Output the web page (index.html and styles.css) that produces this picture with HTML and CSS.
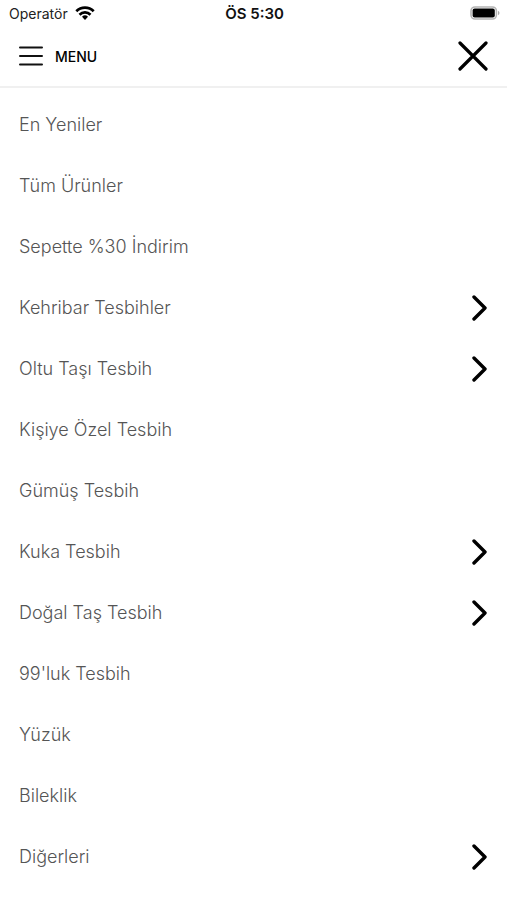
FILE: index.html
```html
<!DOCTYPE html>
<html lang="tr">
<head>
<meta charset="utf-8">
<meta name="viewport" content="width=device-width, initial-scale=1">
<title>Menu</title>
<link rel="stylesheet" href="styles.css">
</head>
<body>
<div class="status">
  <div class="carrier"><span>Operatör</span>
    <svg width="20" height="14" viewBox="0 0 20 14" aria-hidden="true"><g fill="none" stroke="#000" stroke-width="2.7"><path d="M1.3 5.2a12.4 12.4 0 0 1 17.4 0"/><path d="M4.5 8.7a7.8 7.8 0 0 1 11 0"/></g><path d="M10 13.9l-3-3.1a4.3 4.3 0 0 1 6 0z"/></svg>
  </div>
  <time class="clock">ÖS 5:30</time>
  <svg class="battery" width="30" height="14" viewBox="0 0 30 14" aria-hidden="true"><rect x="1" y="1" width="25.4" height="12" rx="4" fill="#fff" stroke="#b4b4b4" stroke-width="1.6"/><rect x="2.6" y="2.6" width="22.2" height="8.8" rx="2"/><path d="M28 4.8v4.4c2-.8 2-3.6 0-4.4z" fill="#aaa"/></svg>
</div>
<header class="bar">
  <button class="toggle" type="button">
    <svg width="24" height="20" viewBox="0 0 24 20" aria-hidden="true"><path d="M1 1.5h22M1 10h22M1 18.5h22" stroke="#111" stroke-width="2" stroke-linecap="round"/></svg>
    <span>MENU</span>
  </button>
  <button class="close" type="button" aria-label="Kapat">
    <svg width="30" height="30" viewBox="0 0 30 30" aria-hidden="true"><path d="M2 2l26 26M28 2L2 28" stroke="#000" stroke-width="3.2" stroke-linecap="round"/></svg>
  </button>
</header>
<nav>
  <ul class="menu">
    <li><a href="#">En Yeniler</a></li>
    <li><a href="#">Tüm Ürünler</a></li>
    <li><a href="#">Sepette %30 İndirim</a></li>
    <li><a href="#">Kehribar Tesbihler<svg class="arrow" viewBox="0 0 16 26" aria-hidden="true"><path d="M2 2l11 11L2 24"/></svg></a></li>
    <li><a href="#">Oltu Taşı Tesbih<svg class="arrow" viewBox="0 0 16 26" aria-hidden="true"><path d="M2 2l11 11L2 24"/></svg></a></li>
    <li><a href="#">Kişiye Özel Tesbih</a></li>
    <li><a href="#">Gümüş Tesbih</a></li>
    <li><a href="#">Kuka Tesbih<svg class="arrow" viewBox="0 0 16 26" aria-hidden="true"><path d="M2 2l11 11L2 24"/></svg></a></li>
    <li><a href="#">Doğal Taş Tesbih<svg class="arrow" viewBox="0 0 16 26" aria-hidden="true"><path d="M2 2l11 11L2 24"/></svg></a></li>
    <li><a href="#">99'luk Tesbih</a></li>
    <li><a href="#">Yüzük</a></li>
    <li><a href="#">Bileklik</a></li>
    <li><a href="#">Diğerleri<svg class="arrow" viewBox="0 0 16 26" aria-hidden="true"><path d="M2 2l11 11L2 24"/></svg></a></li>
  </ul>
</nav>
</body>
</html>
```

FILE: styles.css
```css
* { box-sizing: border-box; }
body { margin: 0; background: #fff; color: #000; font-family: Inter, sans-serif; }
button { border: 0; padding: 0; background: none; color: inherit; font: inherit; }
svg { display: block; flex: none; }
.status { display: grid; grid-template-columns: 1fr auto 1fr; align-items: center; height: 26px; padding: 0 7px 0 9px; font-size: 14px; }
.carrier { display: flex; align-items: center; gap: 7px; color: #222; }
.clock { font-size: 15px; font-weight: 600; color: #111; }
.battery { justify-self: end; }
.bar { display: flex; align-items: center; justify-content: space-between; height: 62px; padding: 0 19px; border-bottom: 2px solid #f0f0f0; }
.toggle { display: flex; align-items: center; gap: 12px; font-size: 14px; font-weight: 500; }
.menu { margin: 0; padding: 6px 19px 0; list-style: none; }
.menu a { display: flex; align-items: center; justify-content: space-between; height: 61px; color: #555; font-size: 18px; font-weight: 300; text-decoration: none; }
.arrow { width: 16px; height: 26px; fill: none; stroke: #000; stroke-width: 3.4; stroke-linecap: round; stroke-linejoin: round; }
```
